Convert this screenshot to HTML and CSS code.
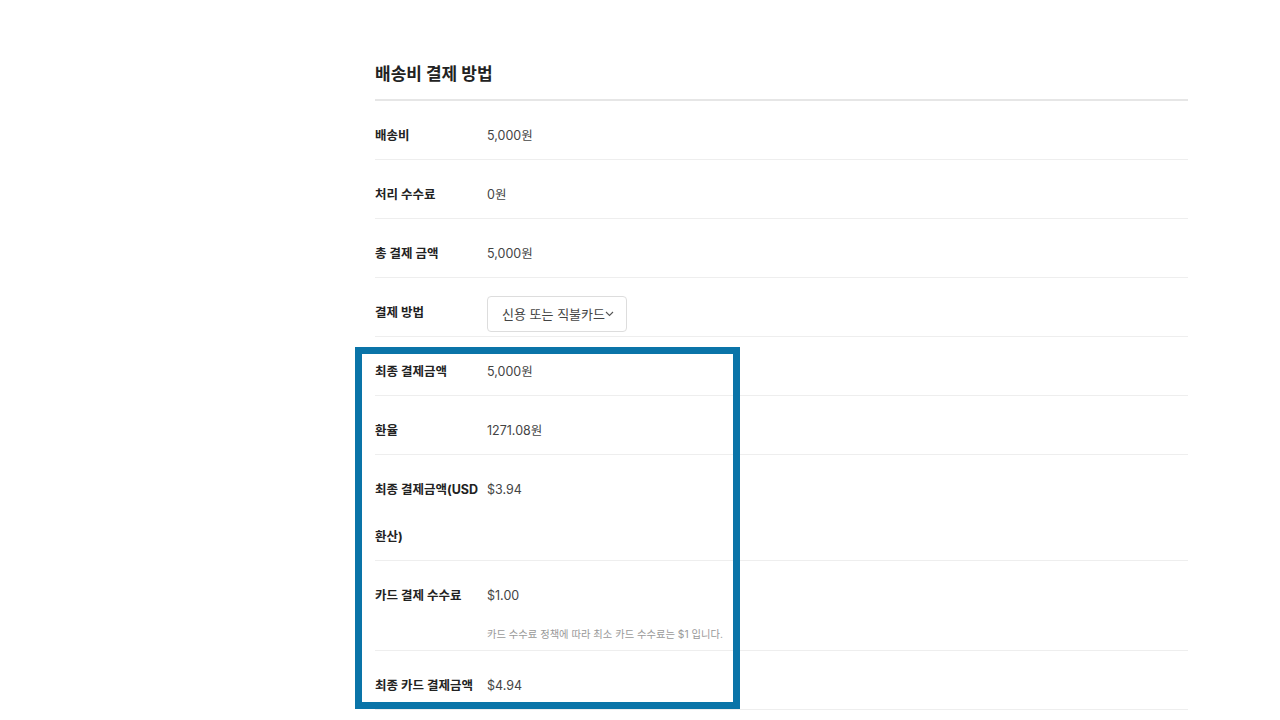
FILE: index.html
```html
<!DOCTYPE html>
<html lang="ko">

<head>
    <meta charset="UTF-8">
    <meta name="viewport" content="width=device-width, initial-scale=1.0">
    <title>배송비 결제 방법</title>
    <link rel="stylesheet" href="styles.css">
</head>

<body>
    <div class="container">
        <h2 class="title">배송비 결제 방법</h2>

        <div class="rows">
            <div class="row">
                <div class="label">배송비</div>
                <div class="value">5,000원</div>
            </div>
            <div class="row">
                <div class="label">처리 수수료</div>
                <div class="value">0원</div>
            </div>
            <div class="row">
                <div class="label">총 결제 금액</div>
                <div class="value">5,000원</div>
            </div>
            <div class="row">
                <div class="label">결제 방법</div>
                <div class="value">
                    <button type="button" class="select">
                        신용 또는 직불카드<svg class="chevron" width="9" height="6" viewBox="0 0 9 6"><path d="M1 1l3.5 3.5L8 1" fill="none" stroke="#555" stroke-width="1.1"/></svg>
                    </button>
                </div>
            </div>
            <div class="row">
                <div class="label">최종 결제금액</div>
                <div class="value">5,000원</div>
            </div>
            <div class="row">
                <div class="label">환율</div>
                <div class="value">1271.08원</div>
            </div>
            <div class="row">
                <div class="label">최종 결제금액(USD 환산)</div>
                <div class="value">$3.94</div>
            </div>
            <div class="row">
                <div class="label">카드 결제 수수료</div>
                <div class="value">
                    $1.00
                    <p class="note">카드 수수료 정책에 따라 최소 카드 수수료는 $1 입니다.</p>
                </div>
            </div>
            <div class="row">
                <div class="label">최종 카드 결제금액</div>
                <div class="value">$4.94</div>
            </div>
        </div>
    </div>

    <!-- highlight frame -->
    <div class="highlight"></div>
</body>

</html>
```

FILE: styles.css
```css
body {
    font-family: Inter, "Noto Sans CJK KR", sans-serif;
    margin: 0;
    background-color: #fff;
    color: #222;
}

.container {
    width: 813px;
    margin-left: 375px;
    padding-top: 56px;
}

.title {
    margin: 0;
    font-size: 17px;
    font-weight: 700;
    line-height: 36px;
    padding-bottom: 7px;
    border-bottom: 2px solid #e6e6e6;
    color: #222;
}

.row {
    display: flex;
    padding-top: 11px;
    border-bottom: 1px solid #eee;
    font-size: 12.5px;
}

.label {
    width: 112px;
    flex-shrink: 0;
    line-height: 47px;
    font-weight: 700;
    color: #222;
}

.value {
    line-height: 47px;
    color: #444;
}

.select {
    display: inline-flex;
    align-items: center;
    height: 36px;
    padding: 0 12px 0 14px;
    border: 1px solid #ddd;
    border-radius: 4px;
    background: #fff;
    font-family: inherit;
    font-size: 13px;
    color: #444;
    vertical-align: middle;
    cursor: pointer;
}

.note {
    margin: 0;
    font-size: 10.3px;
    line-height: 31px;
    color: #999;
}

.highlight {
    position: absolute;
    left: 355px;
    top: 347px;
    width: 371px;
    height: 348px;
    border: 7px solid #0a74a8;
}
```
